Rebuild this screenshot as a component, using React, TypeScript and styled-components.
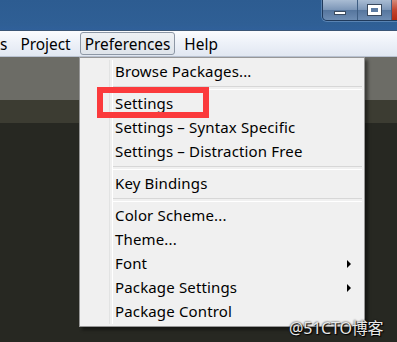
import styled, { createGlobalStyle } from 'styled-components';

const GlobalStyle = createGlobalStyle`
    html, body {
        margin: 0;
        padding: 0;
        background-color: #272822;
        overflow: hidden;
    }
    * {
        box-sizing: border-box;
    }
`;

const Window = styled.div`
    position: relative;
    width: 397px;
    height: 342px;
    display: flex;
    flex-direction: column;
    overflow: hidden;
    font-family: 'Noto Sans', 'Open Sans', sans-serif;
`;

const TitleBar = styled.div`
    height: 31px;
    flex-shrink: 0;
    background: linear-gradient(180deg, #2d5c91 0%, #2f5f95 80%, #30609a 100%);
    border-bottom: 1px solid #3b5676;
    display: flex;
    justify-content: flex-end;
    align-items: flex-start;
`;

const CaptionButtons = styled.div`
    display: flex;
    margin-right: -6px;
    height: 21px;
    border: 1px solid #203a5c;
    border-top: none;
    border-radius: 0 0 0 5px;
    overflow: hidden;
    box-shadow: 0 0 0 1px rgba(170, 200, 235, 0.35);
`;

const CaptionButton = styled.div<{ $close?: boolean }>`
    width: ${(p) => (p.$close ? '11px' : '34px')};
    height: 100%;
    display: flex;
    align-items: center;
    justify-content: center;
    border-left: 1px solid #3e5d82;
    background: ${(p) =>
        p.$close
            ? 'linear-gradient(180deg, #d58a7a 0%, #c2452f 50%, #b42a12 100%)'
            : 'linear-gradient(180deg, #a9bcd3 0%, #7d97b8 48%, #56769e 52%, #6e8db3 100%)'};
    &:first-child {
        border-left: none;
    }
`;

const MinGlyph = styled.div`
    width: 12px;
    height: 4px;
    margin-top: 6px;
    background: #fff;
    border: 1px solid #3a4a5f;
`;

const MaxGlyph = styled.div`
    width: 13px;
    height: 10px;
    border: 3px solid #fff;
    outline: 1px solid #3a4a5f;
    background: #5d7ca3;
`;

const MenuBar = styled.div`
    height: 26px;
    flex-shrink: 0;
    background: linear-gradient(180deg, #fbfcfe 0%, #eef2f9 45%, #e1e7f1 100%);
    border-bottom: 1px solid #b9c2d1;
    display: flex;
    align-items: center;
    gap: 4px;
    overflow: hidden;
`;

const MenuItem = styled.div<{ $open?: boolean }>`
    font-size: 15.4px;
    color: #000;
    height: 23px;
    line-height: 23px;
    padding: 0 4px;
    border: 1px solid ${(p) => (p.$open ? '#8d97a5' : 'transparent')};
    border-radius: 3px;
    background: ${(p) => (p.$open ? 'linear-gradient(180deg, #eef1f5 0%, #dfe4ea 100%)' : 'transparent')};
    white-space: nowrap;
`;

const EdgeItem = styled(MenuItem)`
    padding: 0 3px 0 0;
    margin-left: -1px;
`;

const TabArea = styled.div`
    height: 43px;
    flex-shrink: 0;
    background-color: #6c6c66;
`;

const TabShade = styled.div`
    height: 23px;
    flex-shrink: 0;
    background-color: #3c3c32;
`;

const Editor = styled.div`
    flex: 1;
    background-color: #272822;
`;

const Dropdown = styled.div`
    position: absolute;
    left: 79px;
    top: 57px;
    width: 286px;
    padding: 2px;
    background-color: #f0f0f0;
    border: 1px solid #979797;
    box-shadow: 3px 3px 3px rgba(0, 0, 0, 0.45);
    display: flex;
    flex-direction: column;
    &::before {
        content: '';
        position: absolute;
        top: 2px;
        bottom: 2px;
        left: 29px;
        width: 2px;
        border-left: 1px solid #e2e3e3;
        border-right: 1px solid #ffffff;
    }
`;

const DropItem = styled.div`
    position: relative;
    height: 24px;
    line-height: 22px;
    padding-left: 33px;
    font-size: 15px;
    letter-spacing: 0.15px;
    color: #000;
    white-space: nowrap;
`;

const Arrow = styled.span`
    position: absolute;
    right: 11px;
    top: 8px;
    width: 0;
    height: 0;
    border-top: 4px solid transparent;
    border-bottom: 4px solid transparent;
    border-left: 4px solid #000;
`;

const Separator = styled.div`
    height: 8px;
    display: flex;
    flex-direction: column;
    justify-content: center;
    padding-left: 30px;
    &::after {
        content: '';
        display: block;
        height: 2px;
        border-top: 1px solid #d7d7d7;
        border-bottom: 1px solid #ffffff;
    }
`;

const Highlight = styled.div`
    position: absolute;
    left: 97px;
    top: 87px;
    width: 112px;
    height: 31px;
    border: 6px solid #fb3a3c;
`;

const Watermark = styled.div`
    position: absolute;
    left: 289px;
    top: 315px;
    font-size: 16px;
    color: #e8e8e8;
    font-family: 'Noto Sans', 'Noto Sans CJK SC', sans-serif;
    text-shadow: 0 0 2px #000, 1px 1px 1px #000;
    letter-spacing: -0.2px;
`;

type Entry = { label?: string; sub?: boolean; sep?: boolean };

const entries: Entry[] = [
    { label: 'Browse Packages...' },
    { sep: true },
    { label: 'Settings' },
    { label: 'Settings – Syntax Specific' },
    { label: 'Settings – Distraction Free' },
    { sep: true },
    { label: 'Key Bindings' },
    { sep: true },
    { label: 'Color Scheme...' },
    { label: 'Theme...' },
    { label: 'Font', sub: true },
    { label: 'Package Settings', sub: true },
    { label: 'Package Control' },
];

const App = () => {
    return (
        <Window>
            <GlobalStyle />
            <TitleBar>
                <CaptionButtons>
                    <CaptionButton><MinGlyph /></CaptionButton>
                    <CaptionButton><MaxGlyph /></CaptionButton>
                    <CaptionButton $close />
                </CaptionButtons>
            </TitleBar>
            <MenuBar>
                <EdgeItem>s</EdgeItem>
                <MenuItem>Project</MenuItem>
                <MenuItem $open>Preferences</MenuItem>
                <MenuItem>Help</MenuItem>
            </MenuBar>
            <TabArea />
            <TabShade />
            <Editor />
            <Dropdown>
                {entries.map((e, i) =>
                    e.sep ? (
                        <Separator key={i} />
                    ) : (
                        <DropItem key={i}>
                            {e.label}
                            {e.sub && <Arrow />}
                        </DropItem>
                    )
                )}
            </Dropdown>
            <Highlight />
            <Watermark>@51CTO博客</Watermark>
        </Window>
    );
};

export default App;
